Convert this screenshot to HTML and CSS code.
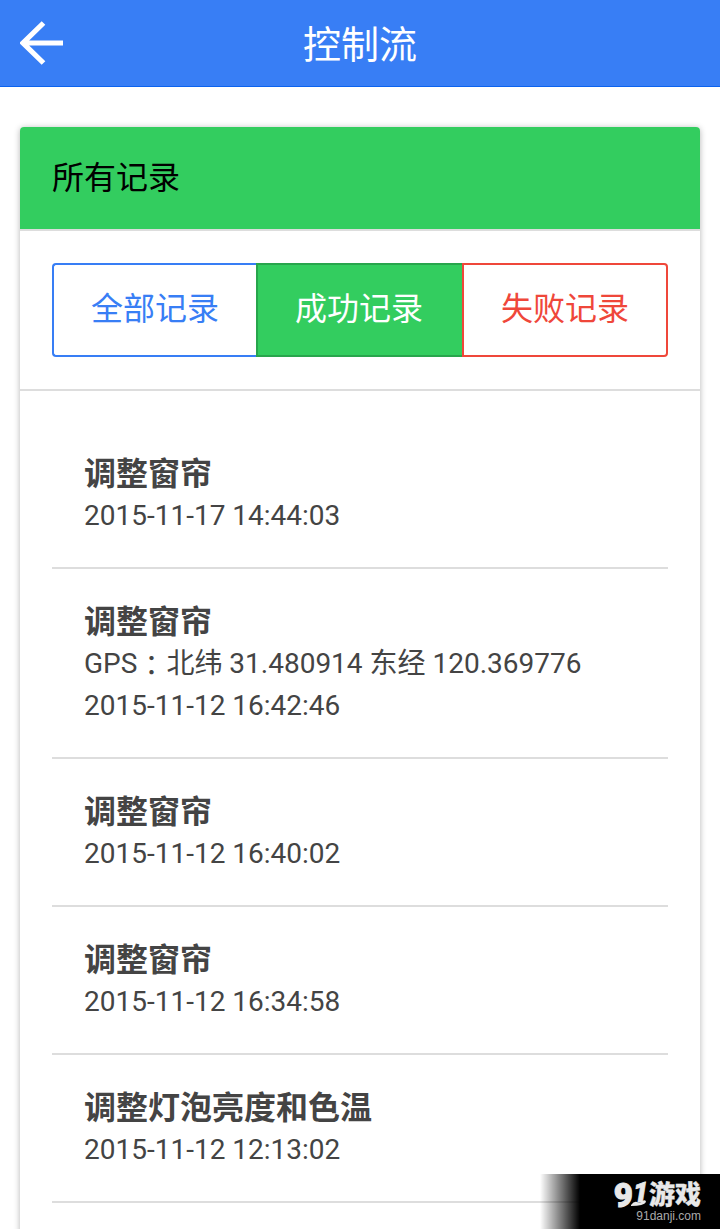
FILE: index.html
```html
<!DOCTYPE html>
<html lang="zh-CN">
<head>
<meta charset="utf-8">
<title>控制流</title>
<link rel="stylesheet" href="styles.css">
</head>
<body>
<header class="bar">
  <svg class="back" viewBox="0 0 44 44"><path d="M23.5 2 3 22 23.5 42M3 22H43" fill="none" stroke="#fff" stroke-width="5.2"/></svg>
  <h1 class="bar-title">控制流</h1>
</header>
<main class="card">
  <div class="card-head">所有记录</div>
  <div class="filters">
    <div class="tab tab-all">全部记录</div>
    <div class="tab tab-ok">成功记录</div>
    <div class="tab tab-fail">失败记录</div>
  </div>
  <div class="list">
    <div class="item"><h2>调整窗帘</h2><p>2015-11-17 14:44:03</p></div>
    <div class="item"><h2>调整窗帘</h2><p>GPS<span class="colon">：</span>北纬 31.480914 东经 120.369776</p><p>2015-11-12 16:42:46</p></div>
    <div class="item"><h2>调整窗帘</h2><p>2015-11-12 16:40:02</p></div>
    <div class="item"><h2>调整窗帘</h2><p>2015-11-12 16:34:58</p></div>
    <div class="item"><h2>调整灯泡亮度和色温</h2><p>2015-11-12 12:13:02</p></div>
  </div>
</main>
<div class="mark">
  <div class="mark-logo"><span class="nine">9</span><span class="one">1</span><svg class="swoosh" viewBox="0 0 16 7"><path d="M0 6Q3 2 6 3Q10 5 11 2Q15 0 15 3Q13 7 0 7Z" fill="#e8e8e8"/></svg><span class="mark-name">游戏</span></div>
  <div class="mark-url">91danji.com</div>
</div>
</body>
</html>
```
FILE: styles.css
```css
* { box-sizing: border-box; }
body {
  margin: 0;
  height: 1229px;
  overflow: hidden;
  position: relative;
  background: #fff;
  color: #444;
  font-family: Roboto, "Noto Sans CJK SC", sans-serif;
}
h1, h2, p { margin: 0; font-weight: 400; }
.bar {
  display: grid;
  grid-template-columns: 44px 1fr 44px;
  align-items: center;
  height: 87px;
  padding: 0 20px;
  background: #387ef5;
  border-bottom: 1px solid #0c63ee;
}
.back { width: 44px; height: 44px; display: block; }
.bar-title { height: 86px; color: #fff; font-size: 38px; line-height: 90px; text-align: center; }
.card {
  margin: 40px 20px 0;
  height: 1140px;
  border-radius: 4px;
  background: #fff;
  box-shadow: 0 1px 6px rgba(0, 0, 0, .3);
}
.card-head {
  height: 104px;
  padding: 0 32px;
  background: #33cd5f;
  background-clip: padding-box;
  border-bottom: 2px solid #ddd;
  border-radius: 4px 4px 0 0;
  color: #000;
  font-size: 32px;
  line-height: 103px;
}
.filters {
  display: grid;
  grid-template-columns: 204px 206px 206px;
  height: 160px;
  padding: 32px 32px;
  border-bottom: 2px solid #ddd;
}
.tab {
  height: 94px;
  border: 2px solid;
  font-size: 32px;
  line-height: 88px;
  text-align: center;
}
.tab-all { color: #387ef5; border-right: 0; border-radius: 4px 0 0 4px; }
.tab-ok { color: #fff; background: #33cd5f; border-color: #28a54c; border-right: 0; padding-right: 2px; }
.tab-fail { color: #ef473a; border-radius: 0 4px 4px 0; }
.list { padding: 30px 32px 0; }
.item { padding: 32px 32px 30px; border-bottom: 2px solid #ddd; }
.item h2 { font-size: 32px; line-height: 42px; font-weight: 700; }
.item p { font-size: 28px; line-height: 42px; height: 42px; white-space: nowrap; }
.colon { display: inline-block; width: 29px; line-height: 1; vertical-align: -3px; font-family: "Noto Sans CJK TC", sans-serif; }
.mark {
  position: absolute;
  right: 0;
  bottom: 0;
  width: 180px;
  height: 55px;
  padding: 8px 19px 0 0;
  background: linear-gradient(90deg, transparent, #000 40px);
  color: #e8e8e8;
  text-align: right;
}
.mark-logo {
  position: relative;
  display: flex;
  justify-content: flex-end;
  height: 27px;
  line-height: 27px;
}
.nine { font: 900 33px/27px Roboto, sans-serif; -webkit-text-stroke: 1px; }
.one { font: italic 900 27px/23px Roboto, sans-serif; width: 14px; margin-right: 2px; -webkit-text-stroke: .8px; }
.swoosh { position: absolute; right: 54px; bottom: 3px; width: 16px; height: 7px; }
.mark-name { font-size: 26px; font-weight: 900; -webkit-text-stroke: .3px; }
.mark-url { font: 12px/14px "Liberation Sans", sans-serif; color: #aaa; }
```
